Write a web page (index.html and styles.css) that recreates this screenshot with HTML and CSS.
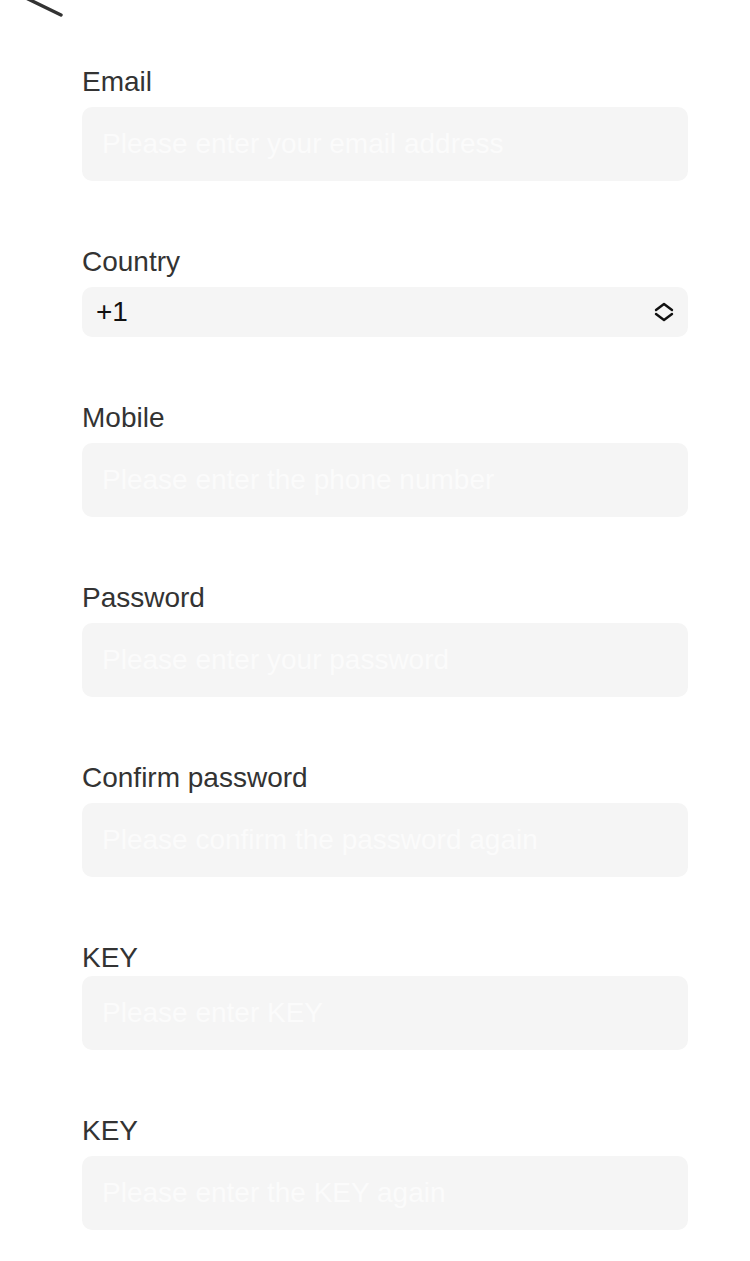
FILE: index.html
```html
<!DOCTYPE html>
<html lang="en">
<head>
<meta charset="utf-8">
<title>Register</title>
<link rel="stylesheet" href="styles.css">
</head>
<body>
<div class="header">
  <svg class="back" width="80" height="30" viewBox="0 0 80 30" aria-hidden="true">
    <path d="M26 -2 L61 15" stroke="#333" stroke-width="3.4" stroke-linecap="round" fill="none"/>
  </svg>
</div>
<form class="form">
  <div class="field">
    <div class="label">Email</div>
    <input class="input" type="text" placeholder="Please enter your email address">
  </div>
  <div class="field">
    <div class="label">Country</div>
    <div class="select">
      <span class="select-value">+1</span>
      <svg class="select-icon" width="22" height="20" viewBox="0 0 22 20" aria-hidden="true">
        <path d="M3 8 L11 2 L19 8" stroke="#111" stroke-width="2.4" fill="none" stroke-linecap="round" stroke-linejoin="round"/>
        <path d="M3 12 L11 18 L19 12" stroke="#111" stroke-width="2.4" fill="none" stroke-linecap="round" stroke-linejoin="round"/>
      </svg>
    </div>
  </div>
  <div class="field">
    <div class="label">Mobile</div>
    <input class="input" type="text" placeholder="Please enter the phone number">
  </div>
  <div class="field">
    <div class="label">Password</div>
    <input class="input" type="password" placeholder="Please enter your password">
  </div>
  <div class="field">
    <div class="label">Confirm password</div>
    <input class="input" type="password" placeholder="Please confirm the password again">
  </div>
  <div class="field">
    <div class="label label-tight">KEY</div>
    <input class="input" type="text" placeholder="Please enter KEY">
  </div>
  <div class="field">
    <div class="label">KEY</div>
    <input class="input" type="text" placeholder="Please enter the KEY again">
  </div>
</form>
</body>
</html>
```
FILE: styles.css
```css
html, body {
  margin: 0;
  padding: 0;
  background: #ffffff;
}

body {
  font-family: "Liberation Sans", Arial, sans-serif;
  color: #333333;
}

.header {
  height: 62px;
  overflow: hidden;
}

.back {
  display: block;
}

.form {
  display: flex;
  flex-direction: column;
  gap: 61px;
  padding: 0 62px 0 82px;
  margin: 0;
}

.field {
  display: flex;
  flex-direction: column;
}

.label {
  font-size: 28px;
  line-height: 40px;
  color: #333333;
  margin-bottom: 5px;
}

.label-tight {
  margin-bottom: -2px;
}

.input {
  box-sizing: border-box;
  display: block;
  width: 100%;
  height: 74px;
  border: 0;
  outline: none;
  border-radius: 10px;
  background: #f5f5f5;
  padding: 0 20px;
  margin: 0;
  font-family: "Liberation Sans", Arial, sans-serif;
  font-size: 28px;
  color: #333333;
}

.input::placeholder {
  color: #fbfbfb;
  opacity: 1;
}

.select {
  box-sizing: border-box;
  display: flex;
  align-items: center;
  justify-content: space-between;
  height: 50px;
  border-radius: 10px;
  background: #f5f5f5;
  padding: 0 13px 0 14px;
}

.select-value {
  font-size: 28px;
  line-height: 32px;
  color: #111111;
}

.select-icon {
  display: block;
}
```
